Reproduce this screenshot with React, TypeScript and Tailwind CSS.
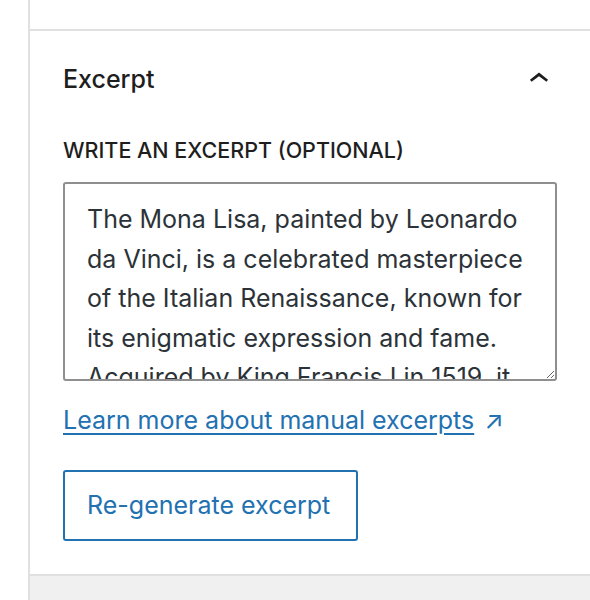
import React from 'react';

const excerptText =
  'The Mona Lisa, painted by Leonardo da Vinci, is a celebrated masterpiece of the Italian Renaissance, known for its enigmatic expression and fame. Acquired by King Francis I in 1519, it is now housed in the Louvre Museum in Paris.';

export default function App() {
  return (
    <div className="flex h-[600px] w-[590px] bg-white font-['Inter',sans-serif] text-[#1e1e1e]">
      {/* left gutter */}
      <div className="w-[28px] shrink-0 bg-white" />

      <div className="flex flex-1 flex-col border-l-2 border-[#e0e0e0]">
        {/* previous panel tail */}
        <div className="h-[31px] shrink-0 border-b-2 border-[#e0e0e0]" />

        {/* Excerpt panel */}
        <div className="shrink-0 border-b-2 border-[#e0e0e0] pl-[33px] pr-[33px] pt-[29px] pb-[33px]">
          <div className="flex h-[37px] items-center justify-between">
            <h2 className="text-[25px] font-medium leading-[30px]">Excerpt</h2>
            <svg viewBox="0 0 24 24" className="mr-[-1px] h-[38px] w-[38px] fill-[#1e1e1e]">
              <path d="M6.3 12.5L12 7.9l5.7 4.6-1 1.3L12 10.2l-4.7 3.6-1-1.3z" />
            </svg>
          </div>

          <div className="mt-[40px] text-[21.5px] font-medium uppercase leading-[26px]">
            Write an excerpt (optional)
          </div>

          <textarea
            readOnly
            defaultValue={excerptText}
            className="mt-[19px] block h-[199px] w-[494px] resize-y overflow-hidden rounded-[3px] border-2 border-[#8f8f8f] px-[22px] pt-[16px] text-[25px] leading-[39.5px] text-[#2c3338] outline-none"
          />

          <a
            href="#"
            className="mt-[24px] block text-[25px] leading-[30px] text-[#2271b1]"
          >
            <span className="underline underline-offset-[4px]">Learn more about manual excerpts</span>
            <span className="ml-[10px]">↗</span>
          </a>

          <button className="mt-[35px] flex h-[71px] w-[295px] items-center rounded-[3px] border-2 border-[#2271b1] bg-white px-[22px] text-[25px] text-[#2271b1]">
            Re-generate excerpt
          </button>
        </div>

        {/* area below */}
        <div className="flex-1 bg-[#f0f0f0]" />
      </div>
    </div>
  );
}
